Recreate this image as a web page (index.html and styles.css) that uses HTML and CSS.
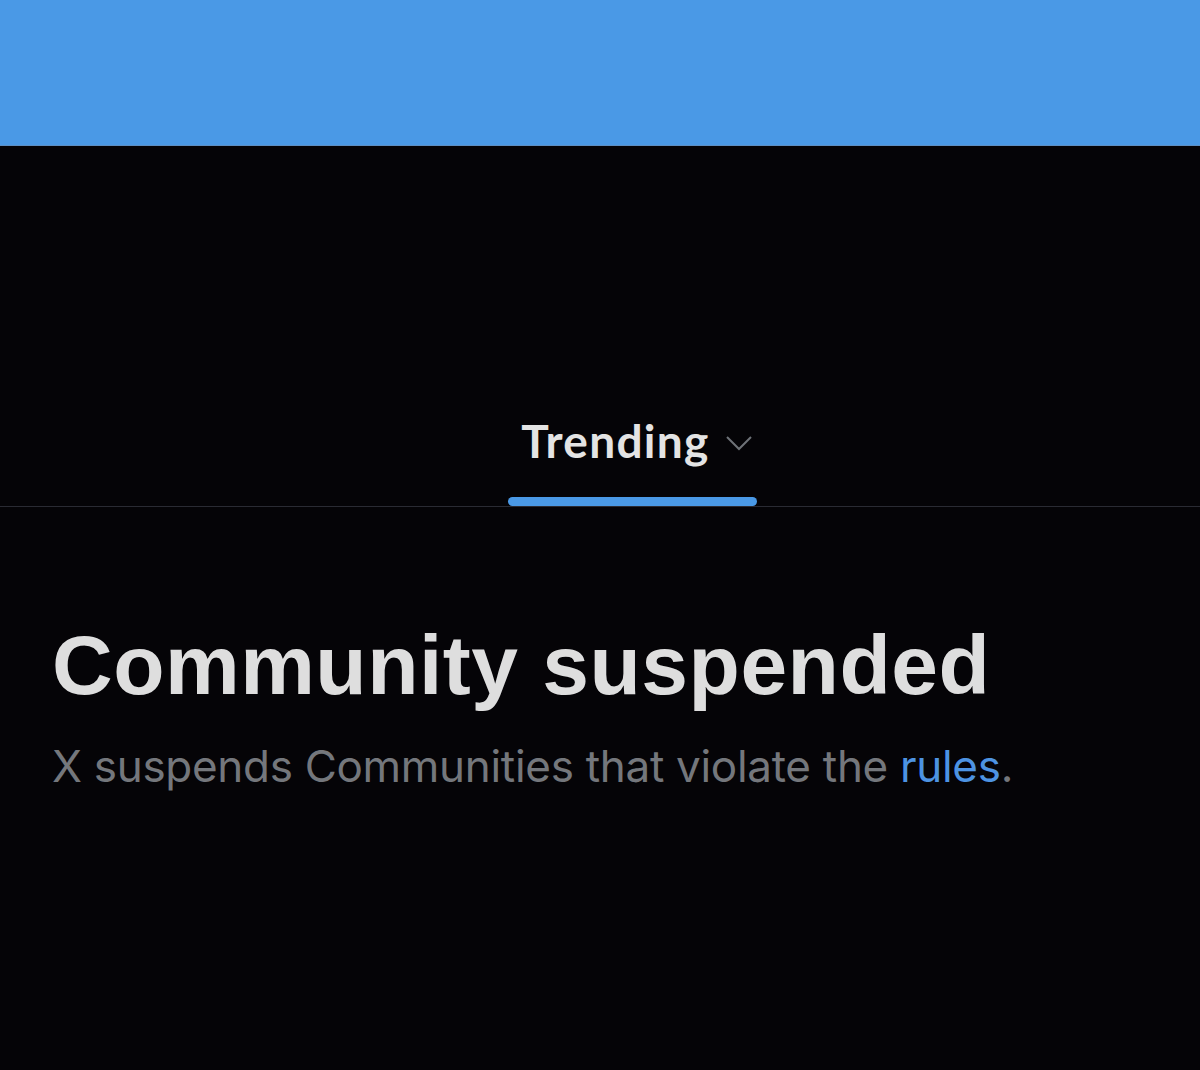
FILE: index.html
```html
<!DOCTYPE html>
<html>
<head>
<meta charset="utf-8">
<link rel="stylesheet" href="styles.css">
</head>
<body>
<div class="banner"></div>
<main class="page">
  <nav class="tabs">
    <div class="tab">
      <div class="tab-label">
        <span>Trending</span>
        <svg class="chev" width="26" height="16" viewBox="0 0 26 16"><path d="M1 2 L13 14 L25 2" fill="none" stroke="#6e7277" stroke-width="2"/></svg>
      </div>
      <div class="indicator"></div>
    </div>
  </nav>
  <section class="content">
    <h1 class="title">Community suspended</h1>
    <p class="desc">X suspends Communities that violate the <a class="link">rules</a>.</p>
  </section>
</main>
</body>
</html>
```
FILE: styles.css
```css
html, body { margin: 0; padding: 0; }
body { background: #050407; width: 1200px; height: 1070px; overflow: hidden; }
.banner { height: 145px; background: #4a99e6; border-bottom: 1px solid #5d8fc4; }
.page { background: #050407; }
.tabs {
  display: flex;
  justify-content: center;
  padding-top: 268px;
  border-bottom: 1px solid #2a2b33;
  padding-left: 65px;
}
.tab { display: flex; flex-direction: column; align-items: center; width: 249px; }
.tab-label {
  display: flex; align-items: center; gap: 16px;
  font-family: "Lato", sans-serif; font-weight: 700; font-size: 46px;
  letter-spacing: 1.3px;
  color: #e4e4e4; line-height: 54px; padding-left: 8px;
}
.chev { margin-top: 4px; }
.indicator {
  width: 249px; height: 9px; border-radius: 5px; background: #4a99e6;
  margin-top: 29px;
}
.content { padding: 110px 0 0 52px; }
.title {
  margin: 0;
  font-family: "Liberation Sans", Arial, sans-serif;
  font-weight: 700; font-size: 84px; line-height: 96px;
  color: #dedede; letter-spacing: 0.5px;
}
.desc {
  margin: 27px 0 0;
  font-family: "Inter", sans-serif; font-size: 44px; line-height: 52px;
  letter-spacing: -0.3px;
  color: #74777c;
}
.link { color: #4d93e2; }
```
